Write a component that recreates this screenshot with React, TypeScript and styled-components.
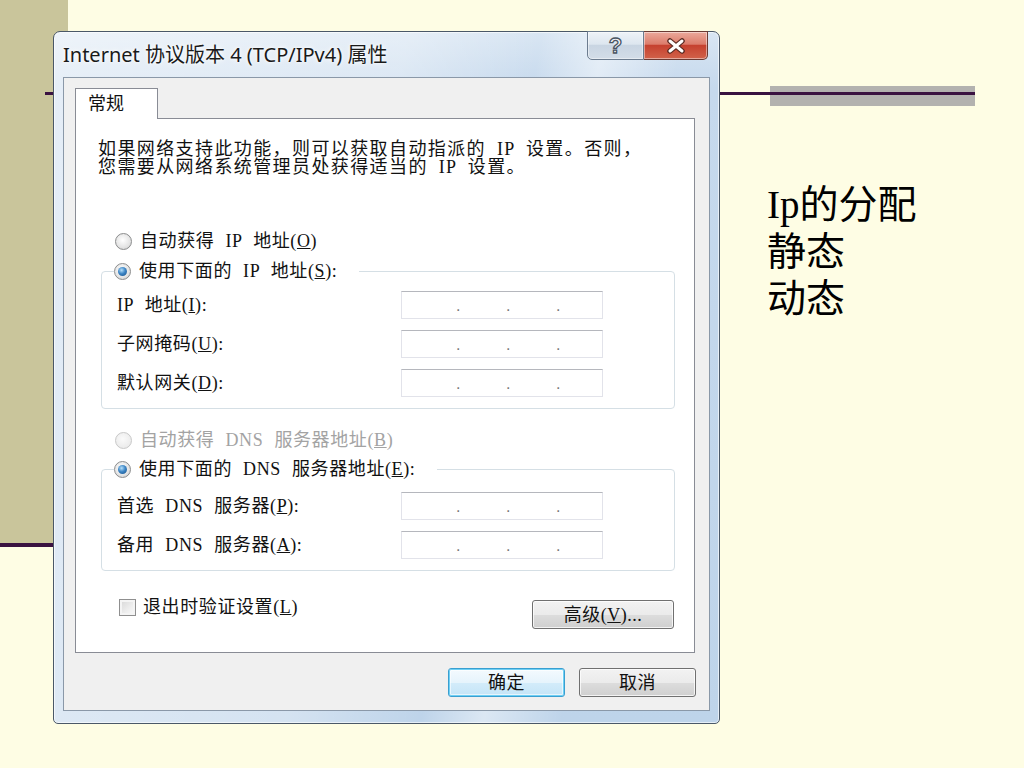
import styled, { createGlobalStyle } from "styled-components";

const SIM = `"Liberation Serif", "Noto Sans CJK SC", serif`;
const UI = `"Noto Sans", "Noto Sans CJK SC", sans-serif`;

const GlobalStyle = createGlobalStyle`
  html, body {
    margin: 0;
    padding: 0;
    background: #fefde4;
  }
`;

/* slide: cream page, khaki side bar and the rule lines are background layers */
const Slide = styled.div`
  width: 1024px;
  height: 768px;
  box-sizing: border-box;
  overflow: hidden;
  padding: 31px 0 0 53px;
  display: flex;
  align-items: flex-start;
  background-color: #fefde4;
  background-image:
    linear-gradient(#3a1240, #3a1240),
    linear-gradient(#b3b2af, #b3b2af),
    linear-gradient(#3a1240, #3a1240),
    linear-gradient(#c9c59b, #c9c59b);
  background-size: 930px 3px, 205px 20px, 60px 4px, 68px 544px;
  background-position: 45px 92px, 770px 86px, 0 543px, 0 0;
  background-repeat: no-repeat;
`;

const Window = styled.div`
  width: 667px;
  height: 693px;
  box-sizing: border-box;
  flex: none;
  display: flex;
  flex-direction: column;
  padding: 0 9px 12px 9px;
  border: 1px solid #4a5868;
  border-radius: 7px 7px 5px 5px;
  background:
    linear-gradient(100deg, rgba(255, 255, 255, 0.55) 0%, rgba(255, 255, 255, 0.35) 45%, rgba(255, 255, 255, 0) 62%, rgba(255, 255, 255, 0.45) 70%, rgba(255, 255, 255, 0) 80%),
    linear-gradient(#d9e6f3 0%, #c6d9ed 8%, #bed4ea 100%);
  box-shadow: inset 0 0 0 1px rgba(255, 255, 255, 0.6);
`;

const TitleBar = styled.div`
  height: 45px;
  flex: none;
  display: flex;
  align-items: flex-start;
`;

const Title = styled.div`
  flex: 1;
  align-self: center;
  font: 20px/26px ${UI};
  color: #1a1a1a;
  text-shadow: 0 0 6px #fff, 0 0 3px #fff;
`;

const CaptionButton = styled.div<{ variant: "help" | "close" }>`
  height: 29px;
  width: ${(p) => (p.variant === "help" ? "57px" : "64px")};
  box-sizing: border-box;
  margin-top: -1px;
  margin-right: ${(p) => (p.variant === "close" ? "2px" : "0")};
  display: flex;
  align-items: center;
  justify-content: center;
  border: 1px solid ${(p) => (p.variant === "help" ? "#6c7c8f" : "#6a3a33")};
  border-left-width: ${(p) => (p.variant === "close" ? "0" : "1px")};
  border-radius: ${(p) => (p.variant === "help" ? "0 0 0 5px" : "0 0 5px 0")};
  background: ${(p) =>
    p.variant === "help"
      ? "linear-gradient(#eef3f8 0%, #dde6ef 45%, #c9d5e2 50%, #d3dde8 100%)"
      : "linear-gradient(#eba99b 0%, #dc7c6b 45%, #c6412f 50%, #d1624a 100%)"};
  box-shadow: inset 0 0 0 1px rgba(255, 255, 255, 0.45);
`;

const HelpGlyph = styled.span`
  font: bold 22px/1 "Liberation Sans", sans-serif;
  color: #f4f6f9;
  -webkit-text-stroke: 1.3px #4b5563;
`;

const Client = styled.div`
  flex: 1;
  box-sizing: border-box;
  display: flex;
  flex-direction: column;
  padding: 10px 13px 0 11px;
  border: 1px solid #8a98a8;
  background: #f0f0f0;
`;

const TabStrip = styled.div`
  display: flex;
  height: 31px;
  position: relative;
  z-index: 1;
  margin-bottom: -1px;
`;

const Tab = styled.div`
  width: 83px;
  box-sizing: border-box;
  border: 1px solid #898c95;
  border-bottom: none;
  background: #fff;
  padding: 5px 0 0 12px;
  font: 18px/20px ${SIM};
  color: #111;
`;

const Panel = styled.div`
  width: 620px;
  height: 535px;
  box-sizing: border-box;
  border: 1px solid #898c95;
  background: #fff;
  padding: 21px 20px 0 22px;
  display: flex;
  flex-direction: column;
  align-items: flex-start;
`;

const Description = styled.p`
  margin: 0;
  font: 18px/18px ${SIM};
  letter-spacing: 1.4px;
  word-spacing: 5px;
  color: #111;
`;

const Text = styled.span`
  font: 18px/18px ${SIM};
  letter-spacing: 0.6px;
  word-spacing: 6px;
`;

const Option = styled(Text).attrs({ as: "div" })<{ disabled?: boolean; top?: number; left?: number }>`
  display: flex;
  align-items: center;
  gap: 8px;
  height: 18px;
  white-space: pre;
  margin-top: ${(p) => p.top ?? 0}px;
  margin-left: ${(p) => p.left ?? 0}px;
  color: ${(p) => (p.disabled ? "#a3a3a3" : "#111")};
`;

const Radio = styled.span<{ checked?: boolean; disabled?: boolean }>`
  width: 17px;
  height: 17px;
  box-sizing: border-box;
  flex: none;
  border-radius: 50%;
  border: 1px solid ${(p) => (p.disabled ? "#c8c8c8" : "#8b8c8d")};
  background: ${(p) =>
    p.disabled
      ? "radial-gradient(circle at 45% 40%, #fafafa 0%, #ececec 70%)"
      : "radial-gradient(circle at 45% 40%, #ffffff 0%, #e4e4e4 60%, #c9c9c9 100%)"};
  display: flex;
  align-items: center;
  justify-content: center;
  &::after {
    content: "";
    display: ${(p) => (p.checked ? "block" : "none")};
    width: 9px;
    height: 9px;
    border-radius: 50%;
    background: radial-gradient(circle at 40% 35%, #b6e0fa 0%, #3d86c6 45%, #154d85 100%);
  }
`;

const Group = styled.fieldset<{ top: number }>`
  margin: ${(p) => p.top}px 0 0 3px;
  width: 574px;
  box-sizing: border-box;
  border: 1px solid #d5dfe5;
  border-radius: 4px;
  padding: 0 0 11px 15px;
  min-width: 0;
`;

const Legend = styled.legend`
  padding: 0 22px 0 0;
  margin-left: -3px;
`;

const Rows = styled.div<{ top: number }>`
  margin-top: ${(p) => p.top}px;
  display: grid;
  grid-template-columns: 284px 202px;
  grid-auto-rows: 28px;
  row-gap: 11px;
  align-items: center;
`;

const Label = styled(Text)`
  color: #111;
`;

const IpBox = styled.div`
  width: 202px;
  height: 28px;
  box-sizing: border-box;
  border: 1px solid #e2e3ea;
  border-top-color: #b5b7bd;
  background: #fff;
  display: flex;
  padding-left: 54px;
  gap: 46px;
`;

const Dot = styled.span`
  width: 4px;
  font: 16px/28px "Liberation Sans", sans-serif;
  color: #777;
`;

const Footer = styled.div`
  width: 100%;
  margin-top: 27px;
  display: flex;
  align-items: flex-start;
  justify-content: space-between;
`;

const Check = styled(Text).attrs({ as: "div" })`
  margin-left: 21px;
  display: flex;
  align-items: center;
  gap: 7px;
  height: 18px;
  color: #111;
`;

const Box = styled.span`
  width: 17px;
  height: 17px;
  box-sizing: border-box;
  border: 1px solid #8f8f8f;
  background: linear-gradient(135deg, #d6d6d6 0%, #eeeeee 60%, #fafafa 100%);
  box-shadow: inset 0 0 0 2px #f4f4f4;
`;

const Button = styled.button<{ primary?: boolean; wide?: boolean }>`
  width: ${(p) => (p.wide ? "142px" : "117px")};
  height: 29px;
  margin-top: ${(p) => (p.wide ? "2px" : "0")};
  box-sizing: border-box;
  padding: 0;
  border: 1px solid ${(p) => (p.primary ? "#3a9fd0" : "#707070")};
  border-radius: 3px;
  background: ${(p) =>
    p.primary
      ? "linear-gradient(#f4fafe 0%, #e6f4fc 50%, #d3ecfa 51%, #c4e4f7 100%)"
      : "linear-gradient(#f2f2f2 0%, #ebebeb 50%, #dddddd 51%, #cfcfcf 100%)"};
  box-shadow: ${(p) =>
    p.primary
      ? "inset 0 0 0 1px #6fd0f5, inset 0 0 0 2px rgba(255,255,255,0.6)"
      : "inset 0 0 0 1px rgba(255,255,255,0.75)"};
  font: 18px/18px ${SIM};
  letter-spacing: 0.5px;
  color: #111;
`;

const ButtonRow = styled.div`
  margin-top: 15px;
  display: flex;
  justify-content: flex-end;
  gap: 14px;
`;

const Notes = styled.div`
  margin: 150px 0 0 47px;
  font: 39px/47px "Liberation Serif", "Noto Sans CJK SC", serif;
  color: #000;
`;

const ipRows = [
  { label: "IP 地址", key: "I" },
  { label: "子网掩码", key: "U" },
  { label: "默认网关", key: "D" },
];

const dnsRows = [
  { label: "首选 DNS 服务器", key: "P" },
  { label: "备用 DNS 服务器", key: "A" },
];

const IpField = () => (
  <IpBox>
    <Dot>.</Dot>
    <Dot>.</Dot>
    <Dot>.</Dot>
  </IpBox>
);

const CloseGlyph = () => (
  <svg width="22" height="16" viewBox="0 0 22 16">
    <path d="M5 3 L17 13 M17 3 L5 13" stroke="#5a2a22" strokeWidth="5.5" strokeLinecap="round" />
    <path d="M5 3 L17 13 M17 3 L5 13" stroke="#ffffff" strokeWidth="3" strokeLinecap="round" />
  </svg>
);

export default function App() {
  return (
    <>
      <GlobalStyle />
      <Slide>
        <Window>
          <TitleBar>
            <Title>Internet 协议版本 4 (TCP/IPv4) 属性</Title>
            <CaptionButton variant="help">
              <HelpGlyph>?</HelpGlyph>
            </CaptionButton>
            <CaptionButton variant="close">
              <CloseGlyph />
            </CaptionButton>
          </TitleBar>
          <Client>
            <TabStrip>
              <Tab>常规</Tab>
            </TabStrip>
            <Panel>
              <Description>
                如果网络支持此功能，则可以获取自动指派的 IP 设置。否则，
                <br />
                您需要从网络系统管理员处获得适当的 IP 设置。
              </Description>
              <Option top={56} left={17}>
                <Radio />
                <span>
                  自动获得 IP 地址(<u>O</u>)
                </span>
              </Option>
              <Group top={12}>
                <Legend>
                  <Option>
                    <Radio checked />
                    <span>
                      使用下面的 IP 地址(<u>S</u>):
                    </span>
                  </Option>
                </Legend>
                <Rows top={11}>
                  {ipRows.map((r) => (
                    <>
                      <Label key={r.key}>
                        {r.label}(<u>{r.key}</u>):
                      </Label>
                      <IpField key={r.key + "f"} />
                    </>
                  ))}
                </Rows>
              </Group>
              <Option top={22} left={17} disabled>
                <Radio disabled />
                <span>
                  自动获得 DNS 服务器地址(<u>B</u>)
                </span>
              </Option>
              <Group top={11}>
                <Legend>
                  <Option>
                    <Radio checked />
                    <span>
                      使用下面的 DNS 服务器地址(<u>E</u>):
                    </span>
                  </Option>
                </Legend>
                <Rows top={14}>
                  {dnsRows.map((r) => (
                    <>
                      <Label key={r.key}>
                        {r.label}(<u>{r.key}</u>):
                      </Label>
                      <IpField key={r.key + "f"} />
                    </>
                  ))}
                </Rows>
              </Group>
              <Footer>
                <Check>
                  <Box />
                  <span>
                    退出时验证设置(<u>L</u>)
                  </span>
                </Check>
                <Button wide>
                  高级(<u>V</u>)...
                </Button>
              </Footer>
            </Panel>
            <ButtonRow>
              <Button primary>确定</Button>
              <Button>取消</Button>
            </ButtonRow>
          </Client>
        </Window>
        <Notes>
          Ip的分配
          <br />
          静态
          <br />
          动态
        </Notes>
      </Slide>
    </>
  );
}
